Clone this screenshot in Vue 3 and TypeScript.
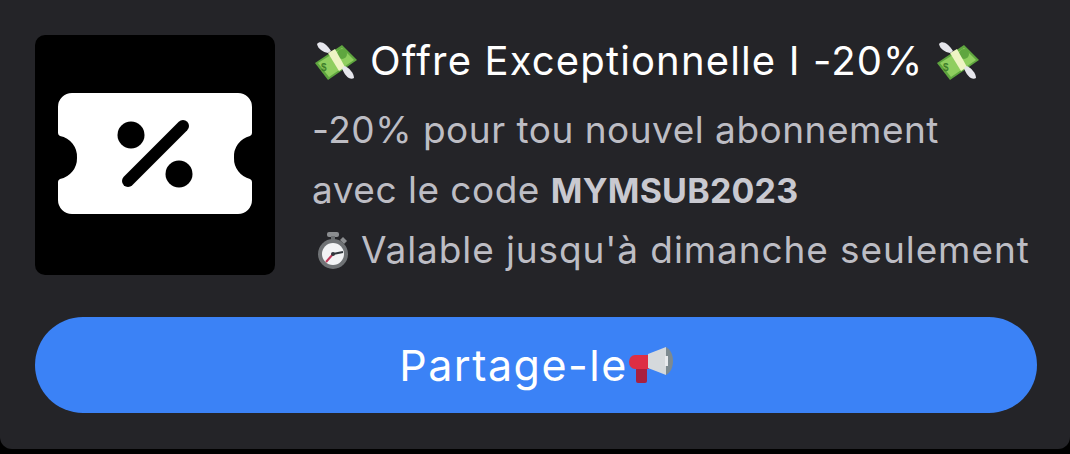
<script setup lang="ts">
const lines: string[] = ['-20% pour tou nouvel abonnement']
</script>

<template>
  <div class="page">
    <section class="card">
      <div class="top">
        <div class="thumb">
          <svg width="240" height="240" viewBox="0 0 240 240">
            <path fill="#fff" d="M37 58H203A14 14 0 0 1 217 72V98Q217 100 215 101A21 21 0 0 0 199 123A21 21 0 0 0 215 144Q217 145 217 147V165A14 14 0 0 1 203 179H37A14 14 0 0 1 23 165V147Q23 145 25 144A21 21 0 0 0 42 123A21 21 0 0 0 25 101Q23 100 23 98V72A14 14 0 0 1 37 58Z" />
            <circle cx="96" cy="100" r="13.5" fill="#000" />
            <circle cx="144" cy="139" r="13.5" fill="#000" />
            <path d="M93 146L148 91" stroke="#000" stroke-width="12" stroke-linecap="round" />
          </svg>
        </div>
        <div class="text">
          <h2 class="title">
            <svg class="emoji money first" viewBox="0 0 42 40">
              <path fill="#5fa63f" d="M0 23L27 5L42 20L13 40Z" />
              <path fill="#8fce5f" d="M3 23L27 8L39 20L14 37Z" />
              <circle cx="27" cy="14" r="5" fill="#5fa63f" />
              <text x="6" y="31" font-size="10" font-weight="700" fill="#3f7f2b" font-family="Liberation Sans, sans-serif">$</text>
              <path fill="#eef4c4" d="M13 13L20 9L30 27L24 31Z" />
              <path fill="#e6e6ec" d="M2 4C5 0 11 3 16 11L13 13C8 12 3 9 2 4Z" />
              <path fill="#e6e6ec" d="M27 28L30 26C34 28 39 33 39 38C35 41 29 35 27 28Z" />
            </svg>
            <span>Offre Exceptionnelle I -20%</span>
            <svg class="emoji money" viewBox="0 0 42 40">
              <path fill="#5fa63f" d="M0 23L27 5L42 20L13 40Z" />
              <path fill="#8fce5f" d="M3 23L27 8L39 20L14 37Z" />
              <circle cx="27" cy="14" r="5" fill="#5fa63f" />
              <text x="6" y="31" font-size="10" font-weight="700" fill="#3f7f2b" font-family="Liberation Sans, sans-serif">$</text>
              <path fill="#eef4c4" d="M13 13L20 9L30 27L24 31Z" />
              <path fill="#e6e6ec" d="M2 4C5 0 11 3 16 11L13 13C8 12 3 9 2 4Z" />
              <path fill="#e6e6ec" d="M27 28L30 26C34 28 39 33 39 38C35 41 29 35 27 28Z" />
            </svg>
          </h2>
          <p v-for="line in lines" :key="line" class="line tight">{{ line }}</p>
          <p class="line tight">avec le code <strong>MYMSUB2023</strong></p>
          <p class="line timer">
            <svg class="emoji clock" viewBox="0 0 30 37">
              <rect x="9" y="0" width="12" height="5" rx="2" fill="#8b8d90" />
              <rect x="13" y="4" width="4" height="5" fill="#6c6f72" />
              <path d="M25 5l4 4-3 3-4-4z" fill="#8b8d90" />
              <circle cx="15" cy="22" r="15" fill="#6f7275" />
              <circle cx="15" cy="22" r="11" fill="#f2f3f5" />
              <path d="M15 22L25 20" stroke="#31373d" stroke-width="2" />
              <path d="M15 22L8 30" stroke="#be3a5a" stroke-width="2" />
              <circle cx="15" cy="22" r="2" fill="#31373d" />
            </svg>
            <span>Valable jusqu'à dimanche seulement</span>
          </p>
        </div>
      </div>
      <button class="share" type="button">
        <span>Partage-le</span>
        <svg class="emoji horn" viewBox="0 0 44 36">
          <path d="M7 20h11v14a2 2 0 0 1-2 2H9a2 2 0 0 1-2-2z" fill="#a8203f" />
          <path d="M6 8h14v14H6a6 7 0 0 1-6-7a6 7 0 0 1 6-7z" fill="#dd2e44" />
          <path d="M19 7L37 0V28L19 21Z" fill="#d5d9dc" />
          <path d="M37 0c4 2 7 7 7 14s-3 12-7 14z" fill="#7d8a90" />
          <rect x="36" y="9" width="3" height="10" fill="#e8eaed" />
        </svg>
      </button>
    </section>
  </div>
</template>

<style>
html, body { margin: 0; background: #000; }
</style>

<style scoped>
.page { width: 1070px; height: 454px; background: #000; overflow: hidden; }
.card {
  box-sizing: border-box;
  width: 1070px;
  height: 449px;
  padding: 35px 33px 0 35px;
  background: #242428;
  border-radius: 0 0 12px 12px;
  font-family: "Inter", "Liberation Sans", sans-serif;
}
.top { display: flex; gap: 37px; height: 240px; }
.thumb { width: 240px; height: 240px; background: #000; border-radius: 10px; flex: none; }
.thumb svg { display: block; }
.text { flex: 1; min-width: 0; margin-top: -5px; }
.title {
  display: flex; align-items: center; gap: 13px;
  margin: 0 0 10px; height: 60px;
  font-size: 40px; font-weight: 400; letter-spacing: 1.15px; color: #fff; white-space: nowrap;
}
.line {
  margin: 0; height: 60px; line-height: 60px;
  font-size: 37px; letter-spacing: 0.9px; color: #bdbdc4; white-space: nowrap;
}
.tight { letter-spacing: 0.5px; }
.line strong { font-size: 34px; font-weight: 700; letter-spacing: 0.2px; color: #c9c9d0; }
.emoji { flex: none; display: block; }
.money { width: 42px; height: 40px; }
.first { margin-left: 3px; }
.timer { display: flex; align-items: center; gap: 13px; }
.clock { width: 30px; height: 37px; margin-left: 6px; }
.share {
  display: flex; align-items: center; justify-content: center; gap: 1px;
  width: 100%; height: 96px; margin-top: 42px; padding: 0;
  border: 0; border-radius: 48px; background: #3b82f6; color: #fff;
  font-family: inherit; font-size: 43px; letter-spacing: 1.5px;
}
.horn { width: 44px; height: 36px; }
</style>
